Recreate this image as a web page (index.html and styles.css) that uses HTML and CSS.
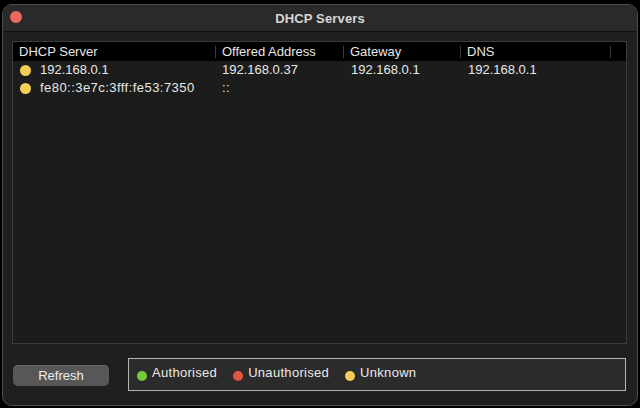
FILE: index.html
```html
<!DOCTYPE html>
<html>
<head>
<meta charset="utf-8">
<link rel="stylesheet" href="styles.css">
</head>
<body>
<div class="window">
  <div class="titlebar">
    <span class="close"></span>
    <span class="title">DHCP Servers</span>
  </div>
  <div class="content">
    <div class="table">
      <div class="row head">
        <div class="hc first">DHCP Server</div>
        <div class="hc">Offered Address</div>
        <div class="hc">Gateway</div>
        <div class="hc">DNS</div>
        <div class="hc last"></div>
      </div>
      <div class="row">
        <div class="c first"><span class="dot yellow"></span>192.168.0.1</div>
        <div class="c">192.168.0.37</div>
        <div class="c g">192.168.0.1</div>
        <div class="c d">192.168.0.1</div>
        <div class="c"></div>
      </div>
      <div class="row">
        <div class="c first"><span class="dot yellow"></span><span class="ipv6">fe80::3e7c:3fff:fe53:7350</span></div>
        <div class="c"><span class="ipv6">::</span></div>
        <div class="c g"></div>
        <div class="c d"></div>
        <div class="c"></div>
      </div>
    </div>
    <div class="bottom">
      <button class="refresh">Refresh</button>
      <div class="legend">
        <span class="item"><span class="ldot green"></span>Authorised</span>
        <span class="item"><span class="ldot red"></span>Unauthorised</span>
        <span class="item"><span class="ldot yellow"></span>Unknown</span>
      </div>
    </div>
  </div>
</div>
</body>
</html>
```

FILE: styles.css
```css
* { box-sizing: border-box; }
html, body { margin: 0; padding: 0; background: #000; }
body {
  font-family: "Liberation Sans", Arial, sans-serif;
  font-size: 13px;
  color: #e8e8e8;
  width: 640px;
  height: 408px;
  overflow: hidden;
}
.window {
  margin: 4px 0 0 2px;
  width: 636px;
  height: 402px;
  border: 1px solid #4e4e4e;
  border-radius: 10px;
  background: #1f1f1f;
  overflow: hidden;
}
.titlebar {
  position: relative;
  height: 27px;
  background: #2a2a2a;
  border-bottom: 1px solid #111;
  display: flex;
  align-items: center;
  justify-content: center;
}
.close {
  position: absolute;
  left: 7px;
  top: 6px;
  width: 12px;
  height: 12px;
  border-radius: 50%;
  background: #ec6a5e;
}
.title {
  font-weight: bold;
  color: #d6d6d6;
  font-size: 13px;
  letter-spacing: 0.15px;
}
.content {
  padding: 9px 10px 0 9px;
}
.table {
  height: 303px;
  border: 1px solid #3c3c3c;
  background: #1c1c1c;
}
.row {
  display: grid;
  grid-template-columns: 202px 128px 117px 150px 1fr;
  height: 18px;
  align-items: center;
}
.row.head {
  background: #000;
  height: 19px;
}
.hc {
  border-left: 1px solid #3a3a3a;
  height: 12px;
  line-height: 12px;
  padding-left: 6px;
  color: #e6e6e6;
  white-space: nowrap;
}
.hc.first { border-left: none; padding-left: 6px; }
.c {
  padding-left: 7px;
  white-space: nowrap;
  line-height: 18px;
  display: flex;
  align-items: center;
}
.c.g { padding-left: 8px; }
.c.d { padding-left: 8px; }
.ipv6 { letter-spacing: 0.45px; }
.dot {
  width: 11px;
  height: 11px;
  border-radius: 50%;
  margin-right: 9px;
  flex: none;
}
.yellow { background: #f6cd55; }
.green { background: #76c83a; }
.red { background: #e0573d; }
.bottom {
  display: flex;
  align-items: center;
  margin-top: 14px;
}
.refresh {
  margin: 2px 0 0 1px;
  width: 96px;
  height: 21px;
  border: none;
  border-radius: 5px;
  background: #575757;
  color: #eeeeee;
  font-family: "Liberation Sans", Arial, sans-serif;
  font-size: 13px;
  padding: 0;
  box-shadow: inset 0 1px 0 #666;
}
.legend {
  margin-left: 19px;
  width: 498px;
  height: 33px;
  border: 1px solid #b4b4b4;
  background: #2b2b2b;
  display: flex;
  align-items: center;
  padding-left: 8px;
  gap: 16px;
}
.item {
  display: flex;
  align-items: center;
  color: #eaeaea;
  margin-top: -5px;
  letter-spacing: 0.3px;
}
.ldot {
  width: 10px;
  height: 10px;
  border-radius: 50%;
  margin-right: 5px;
  margin-top: 8px;
  flex: none;
}
```
